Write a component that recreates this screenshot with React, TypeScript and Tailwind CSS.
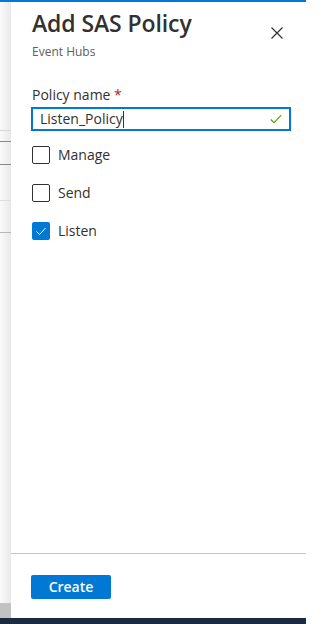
import React from "react";

const FONT = { fontFamily: '"Open Sans", "Noto Sans", Arial, sans-serif' };

function CheckboxRow({ label, checked }: { label: string; checked?: boolean }) {
  return (
    <div className="flex items-center h-[18px]">
      {checked ? (
        <span className="w-[18px] h-[18px] rounded-[2px] bg-[#0078d4] flex items-center justify-center">
          <svg width="12" height="12" viewBox="0 0 12 12" fill="none">
            <path d="M1.5 6.5 L4.5 9.5 L10.5 3" stroke="#fff" strokeWidth="1" />
          </svg>
        </span>
      ) : (
        <span className="w-[18px] h-[18px] rounded-[2px] border border-[#323130] bg-white" />
      )}
      <span className="ml-[8px] text-[14px] leading-[20px] text-[#323130]">{label}</span>
    </div>
  );
}

export default function App() {
  return (
    <div className="w-[321px] h-[624px] bg-white overflow-hidden flex flex-col" style={FONT}>
      <div className="h-[2px] w-[306px] bg-[#0078d4]" />

      <div className="flex h-[616px]">
        {/* page behind the blade */}
        <div className="w-[11px] flex flex-col bg-gradient-to-r from-[#fafafa] to-[#e9e9e9]">
          <div className="h-[128px]" />
          <div className="h-px bg-[#d6d6d6]" />
          <div className="h-[10px]" />
          <div className="h-px bg-[#8a8a8a]" />
          <div className="h-[22px]" />
          <div className="h-px bg-[#8a8a8a]" />
          <div className="h-[35px]" />
          <div className="h-px bg-[#dcdcdc]" />
          <div className="h-[31px]" />
          <div className="h-px bg-[#b8b8b8]" />
          <div className="flex-1" />
          <div className="h-[15px] bg-[#c2c2c2]" />
        </div>

        <div className="w-[295px] flex flex-col">
          <div className="flex-1 px-[21px]">
            <div className="flex items-start justify-between pt-[7px]">
              <div>
                <h1 className="text-[23px] leading-[28px] font-semibold text-[#323130] tracking-[-0.1px]">
                  Add SAS Policy
                </h1>
                <p className="text-[12px] leading-[16px] text-[#605e5c] mt-[7px]">Event Hubs</p>
              </div>
              <button className="mt-[18px] mr-[2px]">
                <svg width="12" height="12" viewBox="0 0 12 12" fill="none">
                  <path d="M0.5 0.5 L11.5 11.5 M11.5 0.5 L0.5 11.5" stroke="#323130" strokeWidth="1.2" />
                </svg>
              </button>
            </div>

            <div className="mt-[25px] text-[14px] leading-[20px] text-[#323130]">
              Policy name <span className="text-[#a4262c]">*</span>
            </div>
            <div className="mt-[2px] -ml-px w-[260px] h-[24px] border-2 border-[#0078d4] flex items-center pl-[7px] pr-[7px]">
              <span className="text-[14px] leading-[20px] text-[#323130]">Listen_Policy</span>
              <span className="w-px h-[17px] bg-[#323130]" />
              <span className="flex-1" />
              <svg width="12" height="10" viewBox="0 0 12 10" fill="none">
                <path d="M0.8 5.5 L4 8.6 L11.2 1.2" stroke="#57a300" strokeWidth="1.2" />
              </svg>
            </div>

            <div className="mt-[15px] flex flex-col gap-[20px]">
              <CheckboxRow label="Manage" />
              <CheckboxRow label="Send" />
              <CheckboxRow label="Listen" checked />
            </div>
          </div>

          <div className="border-t border-[#c8c6c4] px-[20px] pt-[20px] pb-[19px]">
            <button className="w-[80px] h-[24px] rounded-[2px] bg-[#0078d4] text-white text-[14px] font-semibold leading-[20px]">
              Create
            </button>
          </div>
        </div>

        <div className="flex-1 bg-white" />
      </div>

      <div className="h-[6px] w-[306px] bg-[#1b2a41]" />
    </div>
  );
}
